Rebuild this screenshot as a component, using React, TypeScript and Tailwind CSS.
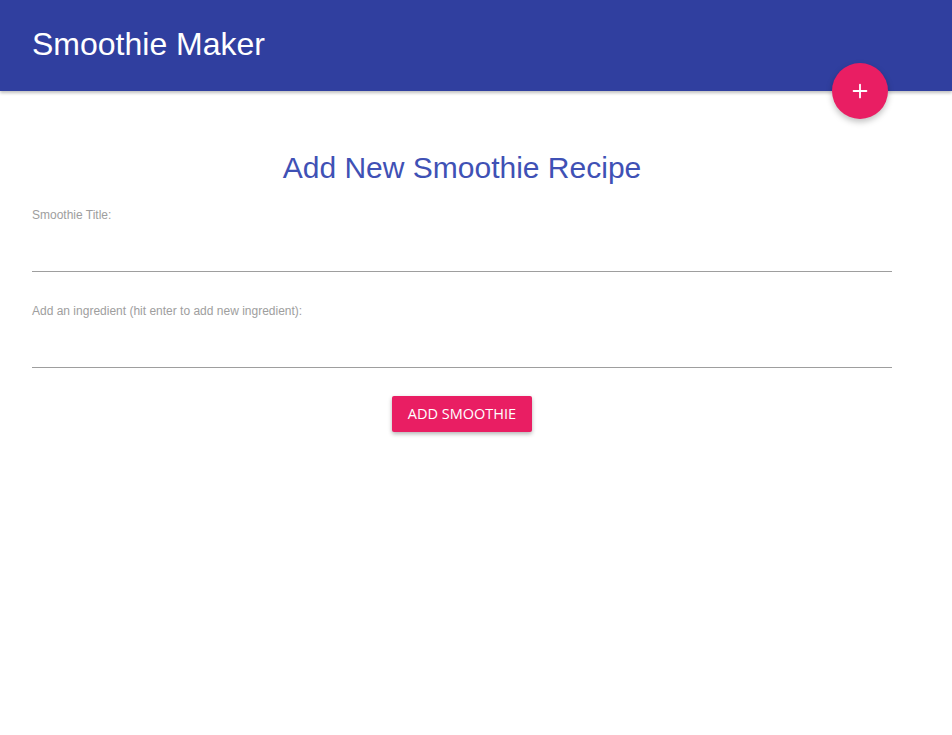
import { Plus } from 'lucide-react';

export default function App() {
  return (
    <div className="min-h-[735px] bg-white font-['Liberation_Sans',Arial,sans-serif]">
      {/* Navbar */}
      <nav className="relative h-[91px] bg-[#303f9f] shadow-[0_2px_3px_rgba(0,0,0,0.25)]">
        <div className="flex h-full items-center px-8">
          <span className="text-[32px] leading-none text-white pb-[4px]">Smoothie Maker</span>
        </div>
        <button className="absolute left-[832px] top-[63px] flex h-[56px] w-[56px] items-center justify-center rounded-full bg-[#e91e63] text-white shadow-[0_3px_6px_rgba(0,0,0,0.25)]">
          <Plus size={22} strokeWidth={2} />
        </button>
      </nav>

      {/* Form */}
      <div className="w-[860px] ml-8">
        <h2 className="mt-[59px] text-center text-[30px] leading-[36px] text-[#3f51b5]">
          Add New Smoothie Recipe
        </h2>

        <div className="mt-[22px]">
          <label className="block text-[12px] leading-[14px] text-[#9e9e9e]">Smoothie Title:</label>
          <div className="h-[50px] border-b border-[#9e9e9e]" />
        </div>

        <div className="mt-[32px]">
          <label className="block text-[12px] leading-[14px] text-[#9e9e9e]">
            Add an ingredient (hit enter to add new ingredient):
          </label>
          <div className="h-[50px] border-b border-[#9e9e9e]" />
        </div>

        <div className="mt-[28px] flex justify-center">
          <button className="h-[36px] w-[140px] rounded-[2px] bg-[#e91e63] font-['Open_Sans',sans-serif] text-[14.5px] text-white shadow-[0_2px_4px_rgba(0,0,0,0.3)]">
            ADD SMOOTHIE
          </button>
        </div>
      </div>
    </div>
  );
}
